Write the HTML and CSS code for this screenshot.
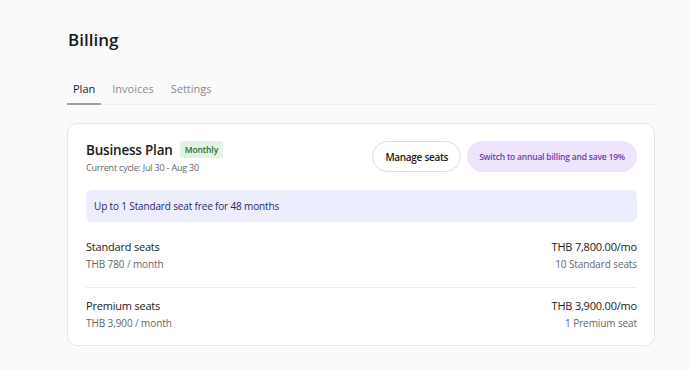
FILE: index.html
```html
<!DOCTYPE html>
<html lang="en">
<head>
<meta charset="UTF-8">
<meta name="viewport" content="width=device-width, initial-scale=1.0">
<title>Billing</title>
<link rel="stylesheet" href="styles.css">
</head>
<body>

<div class="page">
  <h1 class="title">Billing</h1>

  <!-- Вкладки -->
  <div class="tabs">
    <span class="tab active">Plan</span>
    <span class="tab">Invoices</span>
    <span class="tab">Settings</span>
  </div>

  <!-- Карточка плана -->
  <div class="card">
    <div class="plan-head">
      <div>
        <div class="plan-name">Business Plan <span class="badge">Monthly</span></div>
        <div class="cycle">Current cycle: Jul 30 - Aug 30</div>
      </div>
      <div class="actions">
        <button class="btn">Manage seats</button>
        <button class="btn btn-upgrade">Switch to annual billing and save 19%</button>
      </div>
    </div>

    <div class="notice">Up to 1 Standard seat free for 48 months</div>

    <div class="seat-row">
      <div>
        <div class="seat-name">Standard seats</div>
        <div class="seat-sub">THB 780 / month</div>
      </div>
      <div class="right">
        <div class="seat-name">THB 7,800.00/mo</div>
        <div class="seat-sub">10 Standard seats</div>
      </div>
    </div>

    <div class="seat-row">
      <div>
        <div class="seat-name">Premium seats</div>
        <div class="seat-sub">THB 3,900 / month</div>
      </div>
      <div class="right">
        <div class="seat-name">THB 3,900.00/mo</div>
        <div class="seat-sub">1 Premium seat</div>
      </div>
    </div>
  </div>
</div>

</body>
</html>
```

FILE: styles.css
```css
body {
    margin: 0;
    background-color: #fafafa;
    font-family: "Open Sans", Arial, sans-serif;
    color: #1a1a1a;
}
.page {
    padding: 28px 35px 0 67px;
}
.title {
    margin: 0 0 0 1px;
    font-size: 17px;
    font-weight: 600;
    line-height: 24px;
}
.tabs {
    display: flex;
    gap: 5px;
    margin-top: 29px;
    border-bottom: 1px solid #efefef;
}
.tab {
    padding: 0 6px 6px;
    font-size: 11px;
    line-height: 16px;
    color: #8c8c8c;
}
.tab.active {
    color: #1a1a1a;
    border-bottom: 2px solid #a0a0a0;
    margin-bottom: -1px;
}
.card {
    margin-top: 18px;
    background: #fff;
    border: 1px solid #e6e6e6;
    border-radius: 10px;
    padding: 17px 17px 0 18px;
}
.plan-head {
    display: flex;
    justify-content: space-between;
    align-items: flex-start;
}
.plan-name {
    display: flex;
    align-items: center;
    gap: 7px;
    font-size: 13.5px;
    font-weight: 600;
    letter-spacing: -0.2px;
    line-height: 16px;
}
.badge {
    background: #e2f3e4;
    color: #2b6a35;
    font-size: 8.5px;
    font-weight: 600;
    letter-spacing: -0.1px;
    padding: 0 5px;
    border-radius: 3px;
    line-height: 17px;
}
.cycle {
    font-size: 9px;
    letter-spacing: -0.2px;
    line-height: 13px;
    color: #666;
    margin-top: 3px;
}
.actions {
    display: flex;
    gap: 6px;
}
.btn {
    height: 31px;
    border-radius: 16px;
    border: 1px solid #dedede;
    background: #fff;
    font-family: inherit;
    font-size: 10px;
    font-weight: 600;
    letter-spacing: -0.3px;
    color: #1a1a1a;
    padding: 0 12px;
}
.btn-upgrade {
    background: #eee4fc;
    border-color: #eee4fc;
    color: #6a3bbd;
    font-size: 8.5px;
    letter-spacing: -0.2px;
    padding: 0 11px;
}
.notice {
    margin: 16px 0 7px;
    background: #ecedfd;
    border-radius: 6px;
    padding: 0 8px;
    height: 32px;
    line-height: 32px;
    font-size: 10px;
    letter-spacing: -0.15px;
    color: #2c2a66;
}
.seat-row {
    display: flex;
    justify-content: space-between;
    padding: 10px 0 16px;
    border-bottom: 1px solid #ececec;
}
.seat-row:last-child {
    border-bottom: none;
    padding-bottom: 15px;
}
.seat-name {
    font-size: 11px;
    letter-spacing: -0.2px;
    line-height: 15px;
}
.seat-sub {
    margin-top: 3px;
    font-size: 10px;
    letter-spacing: -0.1px;
    color: #666;
    line-height: 14px;
}
.right {
    text-align: right;
}
```
